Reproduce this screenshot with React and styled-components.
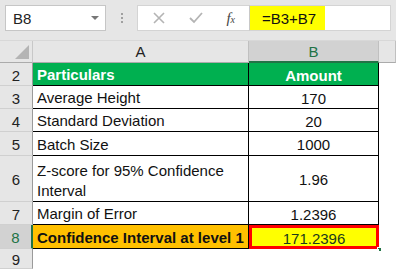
import styled, { createGlobalStyle } from "styled-components";

const GlobalStyle = createGlobalStyle`
  html, body {
    margin: 0;
    padding: 0;
    background: #ffffff;
    font-family: "Liberation Sans", Arial, sans-serif;
  }
  * { box-sizing: border-box; }
`;

const rows = [
  { num: 2, label: 'Particulars', value: 'Amount', kind: 'head' },
  { num: 3, label: 'Average Height', value: '170' },
  { num: 4, label: 'Standard Deviation', value: '20' },
  { num: 5, label: 'Batch Size', value: '1000' },
  { num: 6, label: 'Z-score for 95% Confidence Interval', value: '1.96' },
  { num: 7, label: 'Margin of Error', value: '1.2396' },
  { num: 8, label: 'Confidence Interval at level 1', value: '171.2396', kind: 'result' },
  { num: 9, label: '', value: '', kind: 'blank' },
];

const App = () => {
  return (
    <>
      <GlobalStyle />
      <Page>
        <FormulaBar>
          <NameBox>
            <span>B8</span>
            <Caret />
          </NameBox>
          <Grip>
            <i /><i /><i />
          </Grip>
          <ActionBox>
            <svg width="12" height="12" viewBox="0 0 12 12">
              <path d="M1 1 L11 11 M11 1 L1 11" stroke="#b4b4b4" strokeWidth="1.6" />
            </svg>
            <svg width="14" height="12" viewBox="0 0 14 12">
              <path d="M1 6 L5 10 L13 1" stroke="#b4b4b4" strokeWidth="1.8" fill="none" />
            </svg>
            <Fx>f<sub>x</sub></Fx>
          </ActionBox>
          <FormulaInput>
            <Formula>=B3+B7</Formula>
          </FormulaInput>
        </FormulaBar>

        <Sheet>
          <Corner />
          <ColHead>A</ColHead>
          <ColHead active>B</ColHead>
          <ColHead filler />

          {rows.map(r => (
            <Row key={r.num}>
              <RowHead active={r.kind === 'result'}>{r.num}</RowHead>
              <LabelCell kind={r.kind}>{r.label}</LabelCell>
              <ValueCell kind={r.kind}>
                {r.value}
                {r.kind === 'result' && <FillHandle />}
              </ValueCell>
              <Empty />
            </Row>
          ))}
        </Sheet>
      </Page>
    </>
  );
};

const Page = styled.div`
  width: 396px;
  height: 269px;
  overflow: hidden;
  background: #e6e6e6;
  display: flex;
  flex-direction: column;
`;

const FormulaBar = styled.div`
  height: 41px;
  flex-shrink: 0;
  display: flex;
  align-items: flex-start;
  padding: 5px 0 0 5px;
  border-bottom: 1px solid #d8d8d8;
`;

const NameBox = styled.div`
  width: 101px;
  height: 26px;
  background: #fff;
  border: 1px solid #c6c6c6;
  display: flex;
  align-items: center;
  justify-content: space-between;
  padding: 0 6px 0 7px;
  font-size: 15px;
  color: #222;
`;

const Caret = styled.span`
  width: 0;
  height: 0;
  border-left: 4px solid transparent;
  border-right: 4px solid transparent;
  border-top: 4px solid #777;
`;

const Grip = styled.div`
  width: 31px;
  height: 26px;
  display: flex;
  flex-direction: column;
  align-items: center;
  justify-content: center;
  gap: 2px;
  i {
    width: 2px;
    height: 2px;
    background: #a0a0a0;
  }
`;

const ActionBox = styled.div`
  width: 112px;
  height: 26px;
  background: #fff;
  border: 1px solid #d4d4d4;
  border-right: none;
  display: flex;
  align-items: center;
  justify-content: space-between;
  padding: 0 14px 0 15px;
`;

const Fx = styled.span`
  font-family: "Liberation Serif", serif;
  font-style: italic;
  font-size: 15px;
  color: #444;
  sub {
    font-size: 10px;
    vertical-align: baseline;
  }
`;

const FormulaInput = styled.div`
  width: 142px;
  height: 26px;
  background: #fff;
  border: 1px solid #d4d4d4;
  border-left: 1px solid #c8c8c8;
`;

const Formula = styled.div`
  width: 75px;
  height: 100%;
  background: #ffff00;
  font-size: 15px;
  color: #111;
  display: flex;
  align-items: center;
  padding-left: 12px;
`;

const Sheet = styled.div`
  flex: 1;
  display: grid;
  grid-template-columns: 33px 216px 130px 1fr;
  grid-template-rows: 22px 23px 23px 23px 24px 46px 23px 24px 1fr;
  font-size: 15px;
  color: #111;
`;

const Row = styled.div`
  display: contents;
`;

const Corner = styled.div`
  position: relative;
  background: #e6e6e6;
  border-right: 1px solid #c8c8c8;
  border-bottom: 1px solid #ababab;
  &::after {
    content: "";
    position: absolute;
    right: 3px;
    bottom: 3px;
    width: 0;
    height: 0;
    border-left: 14px solid transparent;
    border-bottom: 14px solid #b4b4b4;
  }
`;

const ColHead = styled.div`
  display: flex;
  align-items: center;
  justify-content: center;
  background: ${p => (p.active ? '#d2d2d2' : '#e6e6e6')};
  color: ${p => (p.active ? '#217346' : '#222')};
  border-right: 1px solid #c0c0c0;
  border-bottom: ${p => (p.active ? '2px solid #217346' : '1px solid #ababab')};
  padding-top: ${p => (p.active ? '1px' : '0')};
`;

const RowHead = styled.div`
  display: flex;
  align-items: center;
  justify-content: center;
  background: ${p => (p.active ? '#d2d2d2' : '#e6e6e6')};
  color: ${p => (p.active ? '#217346' : '#222')};
  border-right: ${p => (p.active ? '2px solid #217346' : '1px solid #9a9a9a')};
  border-bottom: 1px solid #d0d0d0;
  padding-top: 2px;
`;

const cellFill = {
  head: '#00b050',
  result: '#ffc000',
  blank: '#ffffff',
};

const LabelCell = styled.div`
  display: flex;
  align-items: ${p => (p.kind === undefined ? 'flex-end' : 'center')};
  padding: ${p => (p.kind === undefined ? '0 4px 0 4px' : '2px 4px 0 4px')};
  line-height: 20px;
  background: ${p => cellFill[p.kind] || '#fff'};
  color: ${p => (p.kind === 'head' ? '#fff' : '#111')};
  font-weight: ${p => (p.kind === 'head' || p.kind === 'result' ? 'bold' : 'normal')};
  border-right: ${p => (p.kind === 'blank' ? 'none' : '1px solid #000')};
  border-bottom: ${p => (p.kind === 'blank' ? 'none' : '1px solid #000')};
  white-space: normal;
`;

const ValueCell = styled.div`
  position: relative;
  display: flex;
  align-items: center;
  justify-content: center;
  padding-top: 2px;
  background: ${p => (p.kind === 'head' ? '#00b050' : p.kind === 'result' ? '#ffff00' : '#fff')};
  color: ${p => (p.kind === 'head' ? '#fff' : p.kind === 'result' ? '#1b3a1b' : '#111')};
  font-weight: ${p => (p.kind === 'head' ? 'bold' : 'normal')};
  border: ${p => (p.kind === 'result' ? '3px solid #ff0000' : 'none')};
  border-right: ${p => (p.kind === 'blank' ? 'none' : p.kind === 'result' ? '3px solid #ff0000' : '1px solid #000')};
  border-bottom: ${p => (p.kind === 'blank' ? 'none' : p.kind === 'result' ? '3px solid #ff0000' : '1px solid #000')};
`;

const FillHandle = styled.span`
  position: absolute;
  right: -6px;
  bottom: -6px;
  width: 5px;
  height: 5px;
  background: #217346;
  border: 1px solid #fff;
`;

const Empty = styled.div`
  background: #fff;
`;

export default App;
